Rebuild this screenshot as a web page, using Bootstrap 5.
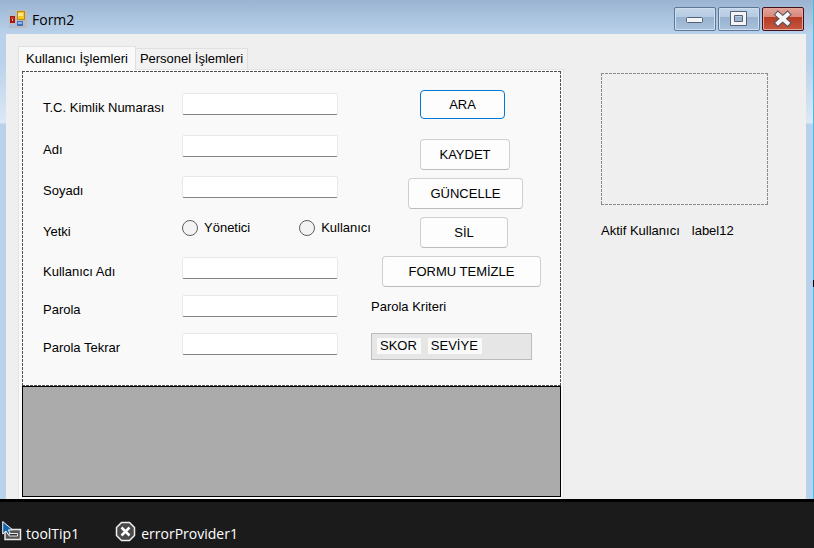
<!DOCTYPE html>
<html lang="tr">
<head>
<meta charset="utf-8">
<meta name="viewport" content="width=device-width, initial-scale=1">
<title>Form2</title>
<link href="https://cdn.jsdelivr.net/npm/bootstrap@5.3.0/dist/css/bootstrap.min.css" rel="stylesheet">
<style>
body{font-family:"Liberation Sans",Arial,sans-serif;font-size:13px;line-height:16px;color:#000;background:#1b1b1b}
.win{position:relative;flex:1 0 auto;background:linear-gradient(#9ab4d2,#b9d1ea 34px,#b9d1ea 60px,#dce8f5 123px,#b9d1ea 124px);border-right:1px solid #41bde6;padding:0 7px 0 6px}
.edge-grip{position:absolute;right:-1px;top:280px;width:1px;height:7px;background:#000}
.titlebar{height:34px;padding:4px 2px 0 3px}
.title-text{font-family:"Open Sans","Noto Sans",sans-serif;font-size:14px;line-height:20px;padding-top:6px;padding-left:5px}
.win-btns{gap:2px;padding-top:3px}
.cap-btn{width:42px;height:24px;padding:0;border:1px solid #5f7796;border-radius:2px;box-shadow:inset 0 0 0 1px #cfdff0;background:linear-gradient(#c3d5e8,#b5cbe2 42%,#98b2cf 43%,#a9c1dc)}
.cap-close{border-color:#46101a;box-shadow:inset 0 0 0 1px #e3a79b;background:linear-gradient(#e3a398,#d8877a 42%,#b73b25 43%,#c4593f)}
.client{background:#efefef;padding:12px 0 0 12px}
.tab-btn{padding:0 4px;border:1px solid #e0e0e0;border-bottom:0;border-left:0;background:#f1f1f1;color:#000;height:21px;line-height:20px}
.tab-btn.active{background:#f9f9f9;height:24px;padding:0 7px;margin-bottom:-1px;position:relative;border-left:1px solid #e0e0e0}
.tab-panel{background:#f9f9f9;border:1px solid #e4e4e4;border-bottom:0;padding:1px 2px 2px 3px}
.dash{--d:#505050;background:
 repeating-linear-gradient(90deg,var(--d) 0 3px,transparent 3px 4px) top/100% 1px no-repeat,
 repeating-linear-gradient(90deg,var(--d) 0 3px,transparent 3px 4px) bottom/100% 1px no-repeat,
 repeating-linear-gradient(var(--d) 0 3px,transparent 3px 4px) left/1px 100% no-repeat,
 repeating-linear-gradient(var(--d) 0 3px,transparent 3px 4px) right/1px 100% no-repeat}
.form-area{height:315px;padding-left:21px}
.fields{flex:1 1 auto;display:grid;grid-template-columns:139px 1fr 33px;grid-template-rows:42px 41px 41px 40px 38px 38px 22px;align-items:start;padding-top:22px}
.fields>.lbl{grid-column:1;padding-top:7px}
.fields input[type=text],.fields input[type=password]{width:100%;height:22px;padding:0 4px;border:1px solid #e8e8e8;border-bottom-color:#858585;border-radius:2px;background:#fff}
.radios{grid-column:2/-1;height:22px}
.radios input{appearance:none;width:16px;height:16px;border:1px solid #606060;border-radius:50%;background:#f3f3f3;margin:0 6px 0 0}
.radios input:checked{background:#0078d4}
.actions{flex:0 0 190px;padding-top:19px}
.act{height:31px;padding:0;font-size:13px;line-height:16px;color:#000;background:#fdfdfd;border:1px solid #d0d0d0;border-bottom-color:#bcbcbc;border-radius:4px;margin:0 0 8px 49px}
.act-find{width:85px;height:29px;border-color:#0078d4;margin-bottom:20px}
.act-save{width:90px}
.act-update{width:115px;margin-left:37px}
.act-delete{width:88px}
.act-clear{width:159px;margin-left:11px}
.meter-box{width:161px;height:27px;padding:4px 5px;gap:7px;background:#e6e6e6;border:1px solid #bcbcbc;margin-top:18px}
.meter-box span{background:#f9f9f9;padding:0 4px 0 3px}
.data-grid{height:111px;background:#ababab;border:1px solid #000}
.side{flex:0 0 242px;padding:27px 0 0 37px}
.photo{--d:#8a8a8a;width:167px;height:132px}
.side-info{gap:12px;margin-top:18px}
.tray{border-top:3px solid #000;background:#1b1b1b;color:#fff;height:49px;padding:19px 0 0 2px;gap:36px;font-family:"Open Sans","Noto Sans",sans-serif;font-size:14px;line-height:26px}
.tray-item{gap:4px}
</style>
<script src="https://cdn.jsdelivr.net/npm/bootstrap@5.3.0/dist/js/bootstrap.bundle.min.js"></script>
</head>
<body class="d-flex flex-column min-vh-100">
<main class="win d-flex flex-column">
  <header class="titlebar d-flex align-items-start">
    <svg class="flex-shrink-0" width="18" height="24" viewBox="0 -6 18 24" aria-hidden="true" shape-rendering="crispEdges">
      <path fill="#bcbcbc" d="M0 0h18v18H0z"/><path fill="#a9bfdb" d="M1 1h6v4H1zM1 14h6v3H1z"/>
      <path fill="#a61a10" d="M1 6h5v7H1z"/><path fill="#c93a28" d="M2 7h3v2H2z"/><path fill="#f3b0a0" d="M3 9h1v2H3z"/>
      <path fill="#b88a10" d="M8 1h8v9H8z"/><path fill="#f6c526" d="M9 2h6v7H9z"/><path fill="#ffe98a" d="M9 3h5v3H9z"/>
      <path fill="#3b6fc8" d="M8 11h6v5H8z"/><path fill="#8db8f5" d="M9 12h4v2H9z"/>
    </svg>
    <span class="title-text flex-grow-1">Form2</span>
    <div class="win-btns d-flex">
      <button class="cap-btn" aria-label="Simge durumuna küçült"><svg class="d-block mx-auto" width="18" height="18"><rect x=".5" y="7.500" width="16" height="5" rx="1" fill="#f4f4f4" stroke="#52617a"/></svg></button>
      <button class="cap-btn" aria-label="Ekranı kapla"><svg class="d-block mx-auto" width="18" height="18"><path fill="#f4f4f4" fill-rule="evenodd" stroke="#52617a" d="M.5 1.500h16v14H.5zM4.500 5.500v6h8v-6z"/></svg></button>
      <button class="cap-btn cap-close" aria-label="Kapat"><svg class="d-block mx-auto" width="20" height="18"><path d="M5 4.500 14.500 13M14.500 4.500 5 13" stroke="#52505f" stroke-width="6" stroke-linecap="square"/><path d="M5 4.500 14.500 13M14.500 4.500 5 13" stroke="#f6f6f6" stroke-width="4" stroke-linecap="square"/></svg></button>
    </div>
  </header>
  <div class="client d-flex flex-grow-1">
    <section class="flex-grow-1 d-flex flex-column">
      <div class="d-flex align-items-end" role="tablist">
        <button class="tab-btn active" role="tab" aria-selected="true">Kullanıcı İşlemleri</button>
        <button class="tab-btn" role="tab" aria-selected="false">Personel İşlemleri</button>
      </div>
      <div class="tab-panel flex-grow-1" role="tabpanel">
        <form class="form-area dash d-flex">
          <div class="fields">
            <label class="lbl" for="tc">T.C. Kimlik Numarası</label><input id="tc" type="text">
            <label class="lbl" for="ad">Adı</label><input id="ad" type="text">
            <label class="lbl" for="soyad">Soyadı</label><input id="soyad" type="text">
            <span class="lbl" id="yetki">Yetki</span>
            <div class="radios d-flex align-items-center justify-content-between" role="radiogroup" aria-labelledby="yetki">
              <label class="d-flex align-items-center"><input type="radio" name="yetki">Yönetici</label>
              <label class="d-flex align-items-center"><input type="radio" name="yetki">Kullanıcı</label>
            </div>
            <label class="lbl" for="kad">Kullanıcı Adı</label><input id="kad" type="text">
            <label class="lbl" for="par">Parola</label><input id="par" type="password">
            <label class="lbl" for="par2">Parola Tekrar</label><input id="par2" type="password">
          </div>
          <div class="actions d-flex flex-column align-items-start">
            <button type="button" class="btn act act-find">ARA</button>
            <button type="button" class="btn act act-save">KAYDET</button>
            <button type="button" class="btn act act-update">GÜNCELLE</button>
            <button type="button" class="btn act act-delete">SİL</button>
            <button type="button" class="btn act act-clear">FORMU TEMİZLE</button>
            <span class="pt-1">Parola Kriteri</span>
            <div class="meter-box d-flex align-items-start"><span>SKOR</span><span>SEVİYE</span></div>
          </div>
        </form>
        <div class="data-grid"></div>
      </div>
    </section>
    <aside class="side">
      <div class="photo dash"></div>
      <div class="side-info d-flex"><span>Aktif Kullanıcı</span><span>label12</span></div>
    </aside>
  </div>
  <div class="edge-grip"></div>
</main>
<footer class="tray d-flex align-items-start">
  <div class="tray-item d-flex">
    <svg width="20" height="22" viewBox="0 0 20 22" aria-hidden="true">
      <path d="M3 8.500h15.500v10H3z" fill="#555" stroke="#e8e8e8" stroke-width="1.500"/><path d="M7 12.500h8.500v2.500H7z" fill="#333" stroke="#e8e8e8"/>
      <path d="M.7 .5v12.500l3.300-3 2.200 3.500 2-1.200-1.900-3.300 4.200-.3z" fill="#1463ae" stroke="#f4f4f4"/>
    </svg>
    <span>toolTip1</span>
  </div>
  <div class="tray-item d-flex">
    <svg width="22" height="22" viewBox="0 0 22 22" aria-hidden="true">
      <path d="M6.500 1.500h8l5 5v8l-5 5h-8l-5-5v-8z" fill="#4a4a4a" stroke="#efefef" stroke-width="1.500" stroke-linejoin="round"/>
      <path d="M6.500 6.500l8 8M14.500 6.500l-8 8" stroke="#fff" stroke-width="2.500"/>
    </svg>
    <span>errorProvider1</span>
  </div>
</footer>
</body>
</html>
